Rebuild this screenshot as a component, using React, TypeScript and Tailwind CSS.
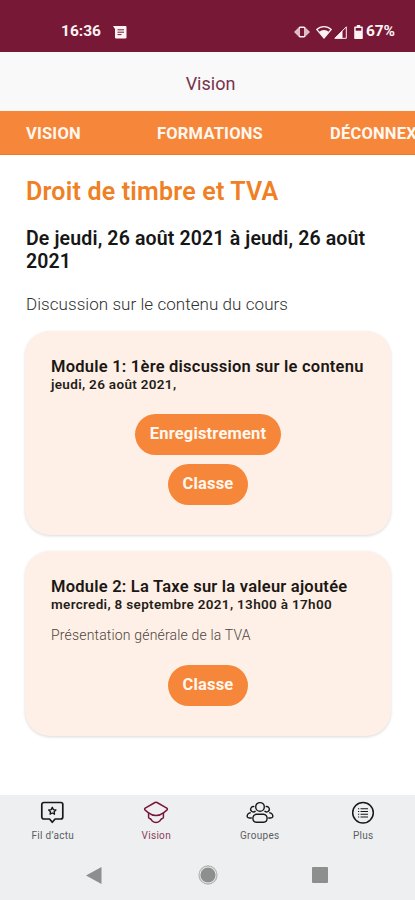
import type { ReactNode } from "react"
import clsx from "clsx"

// ── Data ───────────────────────────────────────────────────

type Module = {
  title: string
  date: string
  description?: string
  actions: string[]
}

const modules: Module[] = [
  {
    title: "Module 1: 1ère discussion sur le contenu",
    date: "jeudi, 26 août 2021,",
    actions: ["Enregistrement", "Classe"],
  },
  {
    title: "Module 2: La Taxe sur la valeur ajoutée",
    date: "mercredi, 8 septembre 2021, 13h00 à 17h00",
    description: "Présentation générale de la TVA",
    actions: ["Classe"],
  },
]

// ── Status bar ─────────────────────────────────────────────

function StatusBar() {
  return (
    <div className="flex h-[52px] shrink-0 items-center bg-[#781837] pt-3 pr-[17px] pl-[61px] text-[#fdf3f5]">
      <span className="w-[52px] text-[15.5px] font-bold">16:36</span>
      <svg width="14" height="13" viewBox="0 0 14 13">
        <path d="M0 0h12.5a1 1 0 0 1 1 1v10.5a1 1 0 0 1-1 1H3a1 1 0 0 1-1-1V3z" fill="currentColor" />
        <path d="M4.5 3.8h6.5M4.5 6.2h6.5M4.5 8.6h4" stroke="#781837" strokeWidth="1" />
      </svg>
      <div className="ml-auto flex items-center">
        <svg width="16" height="12" viewBox="0 0 16 12" fill="currentColor">
          <path d="M0 6l4-4v8zM16 6l-4-4v8z" opacity=".75" />
          <rect x="5" y="1.2" width="6" height="9.6" rx="1.2" fill="#781837" stroke="currentColor" strokeWidth="1.5" />
        </svg>
        <svg width="16" height="14" viewBox="0 0 16 14" className="ml-1.5">
          <path d="M.8 4.5a10.3 10.3 0 0 1 14.4 0L8 13z" fill="none" stroke="currentColor" strokeWidth="1.3" />
          <path d="M3 7a7.4 7.4 0 0 1 10 0l-5 6z" fill="currentColor" />
        </svg>
        <svg width="13" height="13" viewBox="0 0 13 13" className="ml-0.5">
          <path d="M.8 12.3L12.3.9v11.4z" fill="none" stroke="currentColor" />
          <path d="M.5 12.5L8.5 4.6v7.9z" fill="currentColor" />
        </svg>
        <svg width="9" height="14" viewBox="0 0 9 14" className="ml-[7px]">
          <path d="M2.8 0h3.4v1.5H8a.8.8 0 0 1 .8.8v10.9a.8.8 0 0 1-.8.8H1a.8.8 0 0 1-.8-.8V2.3A.8.8 0 0 1 1 1.5h1.8z" fill="currentColor" />
          <path d="M1.7 3h5.6v2.7H1.7z" fill="#781837" />
        </svg>
        <span className="ml-[3px] w-8 text-[15.5px] font-bold tracking-[-0.2px]">67%</span>
      </div>
    </div>
  )
}

// ── Top tabs ───────────────────────────────────────────────

function TopTabs() {
  return (
    <nav className="flex h-11 shrink-0 items-center overflow-hidden border-b border-[#e87c28] bg-[#f6873a] pt-[3px] text-[16.5px] font-bold tracking-[0.2px] whitespace-nowrap text-[#fff7f0]">
      <span className="ml-[26px] w-[131px] shrink-0">VISION</span>
      <span className="w-[173px] shrink-0">FORMATIONS</span>
      <span className="shrink-0">DÉCONNEXION</span>
    </nav>
  )
}

// ── Module card ────────────────────────────────────────────

function ModuleCard({ title, date, description, actions }: Module) {
  return (
    <section className="mb-4 -ml-px flex flex-col rounded-[25px] bg-[#fef0e6] px-[26px] pt-[26px] pb-[30px] shadow-[0_1px_3px_rgba(0,0,0,0.15)]">
      <h3 className="text-[16.5px] leading-5 font-semibold tracking-[0.23px] whitespace-nowrap text-[#1c1715]">{title}</h3>
      <p className="-mt-px text-[13.5px] leading-4 font-semibold tracking-[0.32px] text-[#241d1a]">{date}</p>
      {description && (
        <p className="mt-[13px] text-[14px] leading-5 font-light tracking-[0.17px] text-[#4c4440]">{description}</p>
      )}
      <div className={clsx("flex flex-col items-center gap-[9px]", description ? "mt-5" : "mt-[22px]")}>
        {actions.map((action) => (
          <button
            key={action}
            type="button"
            className="h-[41px] rounded-full bg-[#f6873a] px-[15px] text-[16.5px] font-bold tracking-[0.17px] text-[#fff7f0]"
          >
            {action}
          </button>
        ))}
      </div>
    </section>
  )
}

// ── Bottom navigation ──────────────────────────────────────

function NavItem({ label, active, children }: { label: string; active?: boolean; children: ReactNode }) {
  return (
    <div className={clsx("flex w-[103.75px] flex-col items-center", active ? "text-[#781837]" : "text-[#18191b]")}>
      <svg width="28" height="24" viewBox="0 0 28 24" fill="none" stroke="currentColor" strokeWidth="1.5" strokeLinejoin="round">
        {children}
      </svg>
      <span className={clsx("mt-[5px] text-[10px] leading-3 tracking-[0.3px]", active ? "text-[#8c4058]" : "text-[#5b5d60]")}>
        {label}
      </span>
    </div>
  )
}

function BottomNav() {
  return (
    <div className="h-[105px] shrink-0 bg-[#eeeff1]">
      <nav className="flex pt-[6px] pl-px">
        <NavItem label="Fil d’actu">
          <path d="M4.8 1.5h17a2 2 0 0 1 2 2V16a2 2 0 0 1-2 2h-5.700l-2.800 3.300L10.500 18H4.800a2 2 0 0 1-2-2V3.500a2 2 0 0 1 2-2z" strokeWidth="1.7" />
          <path d="M13.300 6.300l1.100 2.300 2.500.3-1.800 1.800.4 2.500-2.200-1.200-2.200 1.200.4-2.500-1.800-1.800 2.500-.3z" strokeWidth="1.400" />
        </NavItem>
        <NavItem label="Vision" active>
          <path d="M13 1.500Q14 1 15 1.500L24.800 7.200Q26 8.200 24.800 9.200L21.800 11.600Q14 17.600 6.200 11.600L3.200 9.200Q2 8.200 3.200 7.200z" />
          <path d="M6.600 12v4.300q0 1 1 1.200c1.700.3 1.800 1.600 2.700 2.500 2 2 5.400 2 7.400 0 .9-.9 1-2.200 2.700-2.500q1-.2 1-1.200V12" />
        </NavItem>
        <NavItem label="Groupes">
          <g strokeWidth="1.4">
            <circle cx="14" cy="5.900" r="4.300" />
            <path d="M10.500 13.300h7a3.800 3.800 0 0 1 3.600 4c0 2.400-1.300 3.900-3.600 3.900h-7c-2.300 0-3.600-1.500-3.600-3.900a3.800 3.800 0 0 1 3.600-4z" />
            <path d="M8.400 5.700a2.700 2.700 0 1 0 1.100 4.200M19.600 5.700a2.700 2.700 0 1 1-1.100 4.200" />
            <path d="M4.800 11.600c-2.300.5-3.700 2.200-3.600 3.800 0 1.100 1.800 1.600 4.600 1.600M23.200 11.600c2.300.5 3.700 2.200 3.600 3.800 0 1.100-1.800 1.600-4.600 1.600" />
          </g>
        </NavItem>
        <NavItem label="Plus">
          <circle cx="14" cy="11.700" r="10.300" />
          <path d="M11.500 7.700h7.500M11.500 10.500h7.500M11.500 13.300h7.500M11.500 16h7.500M9 7.700h1.200M9 10.500h1.200M9 13.300h1.200M9 16h1.200" strokeWidth="1.1" />
        </NavItem>
      </nav>
      <div className="mt-[23px] flex h-5 items-center pl-[86px] text-[#8d8e8e]">
        <svg width="16" height="17" viewBox="0 0 16 17">
          <path d="M0 8.5L15.5 0v17z" fill="currentColor" />
        </svg>
        <svg width="20" height="20" viewBox="0 0 20 20" className="ml-24">
          <circle cx="10" cy="10" r="9" fill="none" stroke="#b5b6b6" strokeWidth="1.3" />
          <circle cx="10" cy="10" r="7.6" fill="currentColor" />
        </svg>
        <div className="ml-[94px] h-4 w-4 rounded-[1px] bg-[#8d8e8e]" />
      </div>
    </div>
  )
}

// ── Screen ─────────────────────────────────────────────────

export default function App() {
  return (
    <div className="flex h-[900px] w-[415px] flex-col overflow-hidden bg-white font-['Roboto','Liberation_Sans',sans-serif]">
      <StatusBar />
      <header className="flex h-[59px] shrink-0 items-center justify-center bg-[#f9f9fa] pt-[3px] pl-[6px] text-[18px] text-[#78334b]">
        Vision
      </header>
      <TopTabs />
      <main className="flex-1 pt-[21px] pr-6 pl-[26px]">
        <h1 className="text-[25px] leading-8 font-semibold tracking-[0.2px] text-[#ef8023]">Droit de timbre et TVA</h1>
        <h2 className="mt-[19px] text-[19.5px] leading-[23px] font-semibold tracking-[0.15px] text-[#161616]">
          De jeudi, 26 août 2021 à jeudi, 26 août 2021
        </h2>
        <p className="mt-[19px] mb-[15px] text-[17px] leading-6 font-light tracking-[0.06px] text-[#303030]">
          Discussion sur le contenu du cours
        </p>
        {modules.map((item) => (
          <ModuleCard key={item.title} {...item} />
        ))}
      </main>
      <BottomNav />
    </div>
  )
}
